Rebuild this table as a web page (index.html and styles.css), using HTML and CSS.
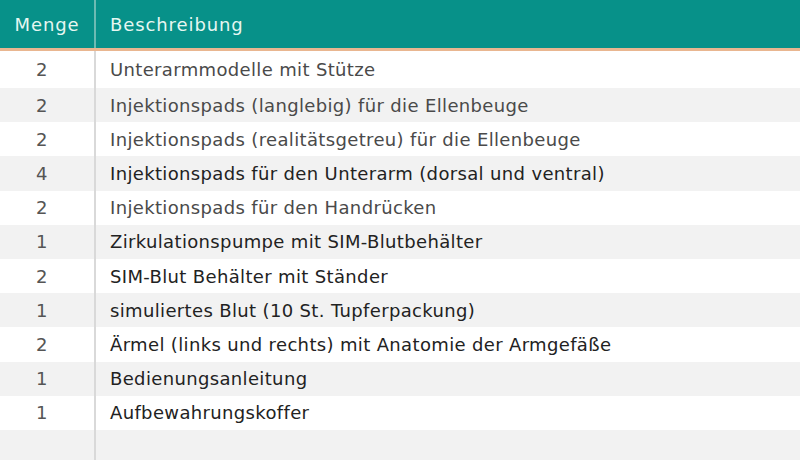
FILE: index.html
```html
<!DOCTYPE html>
<html lang="de">
<head>
<meta charset="utf-8">
<link rel="stylesheet" href="styles.css">
</head>
<body>
<div class="table">
  <div class="head">
    <div class="qty">Menge</div>
    <div class="desc">Beschreibung</div>
  </div>
  <div class="body">
    <div class="row first"><div class="qty">2</div><div class="desc light">Unterarmmodelle mit Stütze</div></div>
    <div class="row alt"><div class="qty">2</div><div class="desc light">Injektionspads (langlebig) für die Ellenbeuge</div></div>
    <div class="row"><div class="qty">2</div><div class="desc light">Injektionspads (realitätsgetreu) für die Ellenbeuge</div></div>
    <div class="row alt"><div class="qty">4</div><div class="desc">Injektionspads für den Unterarm (dorsal und ventral)</div></div>
    <div class="row"><div class="qty">2</div><div class="desc light">Injektionspads für den Handrücken</div></div>
    <div class="row alt"><div class="qty">1</div><div class="desc">Zirkulationspumpe mit SIM-Blutbehälter</div></div>
    <div class="row"><div class="qty">2</div><div class="desc">SIM-Blut Behälter mit Ständer</div></div>
    <div class="row alt"><div class="qty">1</div><div class="desc">simuliertes Blut (10 St. Tupferpackung)</div></div>
    <div class="row"><div class="qty">2</div><div class="desc">Ärmel (links und rechts) mit Anatomie der Armgefäße</div></div>
    <div class="row alt"><div class="qty">1</div><div class="desc">Bedienungsanleitung</div></div>
    <div class="row"><div class="qty">1</div><div class="desc">Aufbewahrungskoffer</div></div>
    <div class="row alt empty"><div class="qty"></div><div class="desc"></div></div>
  </div>
</div>
</body>
</html>
```

FILE: styles.css
```css
html, body {
  margin: 0;
  padding: 0;
  background: #ffffff;
}
body {
  width: 800px;
  height: 460px;
  overflow: hidden;
  font-family: "DejaVu Sans", sans-serif;
  font-size: 18px;
  letter-spacing: 0.35px;
}
.table {
  width: 800px;
}
.head {
  display: flex;
  height: 48px;
  background: #079189;
  border-bottom: 3px solid #e9b690;
  color: #e6f7f1;
  font-size: 18px;
  letter-spacing: 0.9px;
}
.head .qty {
  width: 94px;
  display: flex;
  align-items: center;
  justify-content: center;
  border-right: 2px solid #6dbbb3;
}
.head .desc {
  flex: 1;
  display: flex;
  align-items: center;
  padding-left: 14px;
}
.body {
  display: flex;
  flex-direction: column;
}
.row {
  display: flex;
  height: 34.2px;
  background: #ffffff;
}
.row.first {
  height: 37px;
}
.row.alt {
  background: #f2f2f2;
}
.row.empty {
  height: 40px;
}
.row .qty {
  width: 84px;
  padding-right: 10px;
  display: flex;
  align-items: center;
  justify-content: center;
  color: #555555;
  border-right: 2px solid #d9d9d9;
}
.row .desc {
  flex: 1;
  display: flex;
  align-items: center;
  padding-left: 14px;
  color: #222222;
}
.row .desc.light {
  color: #4a4a4a;
}
```
